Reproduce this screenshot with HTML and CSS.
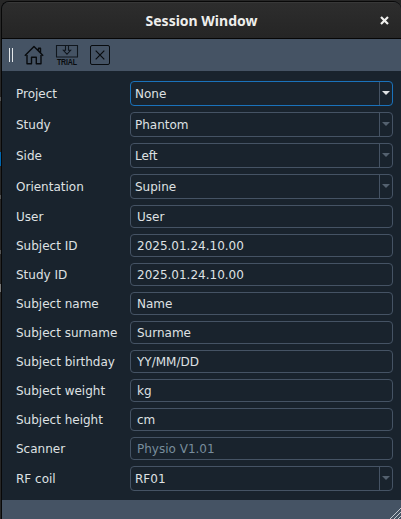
FILE: index.html
```html
<!DOCTYPE html>
<html lang="en">
<head>
<meta charset="utf-8">
<title>Session Window</title>
<link rel="stylesheet" href="styles.css">
</head>
<body>
<div class="desktop">
  <i class="peek peek-a"></i><i class="peek peek-blue"></i><i class="peek peek-b"></i><i class="peek peek-c"></i><i class="peek peek-d"></i>
  <main class="window">
    <header class="titlebar">
      <h1>Session Window</h1>
      <svg class="close" width="9" height="9" viewBox="0 0 9 9"><path d="M1 1l7 7M8 1L1 8" stroke="#f0f0ee" stroke-width="2.2"/></svg>
    </header>
    <nav class="toolbar">
      <span class="grip"></span>
      <svg class="home" width="20" height="20" viewBox="0 0 20 20" fill="none" stroke="#080b0e" stroke-width="1.4" stroke-linejoin="round"><path d="M3 10v8.8h4.5v-6.6h4.8v6.6H17V10M.8 10.8L10 1.4l9.2 9.4M14.5 5.8V3.2h2v4.6"/></svg>
      <svg class="trial" width="22" height="24" viewBox="0 -2 22 24"><path d="M.5 .5h21v11.5H.5zM9.5 .5v4.8H7.4L11 9.3l3.6-4h-2.1V.5" fill="none" stroke="#10161d" stroke-width="1.1"/><text transform="translate(1 19.6) scale(.78 1)" textLength="25.6" lengthAdjust="spacing">TRIAL</text></svg>
      <svg class="exit" width="20" height="20" viewBox="0 0 20 20" fill="none" stroke="#080b0e"><rect x=".5" y=".5" width="19" height="19" rx="1.5"/><path d="M5.7 5.7l8.6 8.6M14.3 5.7l-8.6 8.6" stroke-width="1.2"/></svg>
    </nav>
    <section class="form">
      <div class="row"><span class="label">Project</span><div class="field combo active"><span>None</span><b class="drop"><i></i></b></div></div>
      <div class="row"><span class="label">Study</span><div class="field combo"><span>Phantom</span><b class="drop"><i></i></b></div></div>
      <div class="row"><span class="label">Side</span><div class="field combo"><span>Left</span><b class="drop"><i></i></b></div></div>
      <div class="row"><span class="label">Orientation</span><div class="field combo"><span>Supine</span><b class="drop"><i></i></b></div></div>
      <div class="row"><span class="label">User</span><div class="field">User</div></div>
      <div class="row"><span class="label">Subject ID</span><div class="field">2025.01.24.10.00</div></div>
      <div class="row"><span class="label">Study ID</span><div class="field">2025.01.24.10.00</div></div>
      <div class="row"><span class="label">Subject name</span><div class="field">Name</div></div>
      <div class="row"><span class="label">Subject surname</span><div class="field">Surname</div></div>
      <div class="row"><span class="label">Subject birthday</span><div class="field">YY/MM/DD</div></div>
      <div class="row"><span class="label">Subject weight</span><div class="field">kg</div></div>
      <div class="row"><span class="label">Subject height</span><div class="field">cm</div></div>
      <div class="row"><span class="label">Scanner</span><div class="field muted">Physio V1.01</div></div>
      <div class="row"><span class="label">RF coil</span><div class="field combo"><span>RF01</span><b class="drop"><i></i></b></div></div>
    </section>
    <footer class="status">
      <svg width="11" height="11" viewBox="0 0 11 11" stroke="#c3c9d0" stroke-width="1"><path d="M0 11L11 0M4 11l7-7M8 11l3-3"/></svg>
    </footer>
  </main>
</div>
</body>
</html>
```
FILE: styles.css
```css
* { box-sizing: border-box; }
body { margin: 0; font: 12px/14px "DejaVu Sans", sans-serif; color: #dfe1e3; }
.desktop { position: relative; width: 401px; height: 519px; overflow: hidden; background: #272727; padding: 1px 0 0 1px; }
.peek { position: absolute; left: 0; width: 1px; height: 4px; background: #555; }
.peek-a { top: 97px; }
.peek-blue { top: 152px; height: 14px; background: #0067b0; }
.peek-b { top: 195px; }
.peek-c { top: 250px; }
.peek-d { top: 284px; height: 8px; background: #777; }
.window { height: 518px; display: flex; flex-direction: column; border: solid #080808; border-width: 1px 0 0 1px; border-radius: 8px 8px 0 0; overflow: hidden; background: #19232d; }
.titlebar { position: relative; flex: 0 0 37px; display: flex; align-items: center; justify-content: center; background: linear-gradient(#2d2d2d, #252525); border-top: 1px solid #383838; border-bottom: 1px solid #060606; }
.titlebar h1 { margin: 0; font: bold 14px/18px "Noto Sans", sans-serif; color: #eeeeec; }
.close { position: absolute; right: 12.5px; top: 13px; }
.toolbar { flex: 0 0 32px; display: flex; align-items: center; background: #455364; padding-left: 7px; }
.grip { width: 4px; height: 14px; border: solid #e4e7ea; border-width: 0 1px; }
.home { margin-left: 11px; }
.trial { margin-left: 12px; overflow: visible; }
.trial text { font: bold 9px "Liberation Sans", sans-serif; fill: #080b0e; }
.exit { margin-left: 12px; }
.form { flex: 1; padding: 10px 8px 0 14px; display: flex; flex-direction: column; gap: 6px; }
.row { display: flex; align-items: center; }
.label { width: 114px; white-space: nowrap; }
.field { flex: 1; height: 23px; display: flex; align-items: center; border: 1px solid #455364; border-radius: 4px; padding-left: 6px; }
.combo { height: 25px; padding-left: 4px; justify-content: space-between; }
.active { border-color: #1a72bb; }
.muted { color: #788d9c; }
.drop { width: 13px; height: 23px; border-left: 1px solid #455364; display: flex; align-items: center; justify-content: center; padding-bottom: 1px; }
.drop i { border: solid transparent; border-width: 4px 4px 0; border-top-color: #54616f; }
.active .drop i { border-top-color: #dfe1e3; }
.status { flex: 0 0 19px; background: #455364; display: flex; align-items: flex-end; justify-content: flex-end; }
```
